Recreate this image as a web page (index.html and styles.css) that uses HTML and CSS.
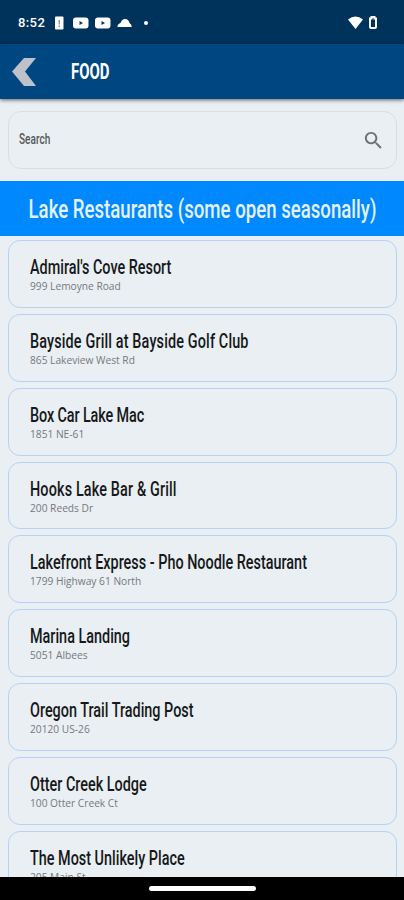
FILE: index.html
```html
<!DOCTYPE html>
<html lang="en">
<head>
  <meta charset="UTF-8">
  <meta name="viewport" content="width=device-width, initial-scale=1.0">
  <title>Food</title>
  <link rel="stylesheet" href="styles.css">
</head>
<body>
  <div class="screen">
    <!-- Status bar -->
    <div class="status-bar">
      <span class="clock">8:52</span>
      <svg class="status-left" width="98" height="16" viewBox="0 0 98 16">
        <rect x="1" y="2.500" width="8.500" height="13" rx="1" fill="#fff"/>
        <path d="M5.200 6v4.500M5.200 11.500v1.500" stroke="#55658c" stroke-width="1"/>
        <rect x="19" y="3.500" width="15.500" height="11" rx="3" fill="#fff"/>
        <path d="M25.500 7l3.500 2-3.500 2z" fill="#00335c"/>
        <rect x="41" y="3.500" width="15.500" height="11" rx="3" fill="#fff"/>
        <path d="M47.500 7l3.500 2-3.500 2z" fill="#00335c"/>
        <path d="M63.500 13q-.5-2.500 3-4 1.500-4 4.500-4 3.500 0 4.500 4 2 .8 2.300 4z" fill="#fff"/>
        <circle cx="92" cy="9" r="2" fill="#fff"/>
      </svg>
      <svg class="status-right" width="32" height="16" viewBox="0 0 32 16">
        <path d="M1 5.500Q8.500-.5 16 5.500L8.500 15z" fill="#fff"/>
        <path d="M23 4.500h1.500V3h3v1.500H29v8.500q0 1-1 1h-4q-1 0-1-1z" fill="none" stroke="#fff" stroke-width="2"/>
      </svg>
    </div>

    <!-- App bar -->
    <header class="app-bar">
      <svg class="back" width="26" height="30" viewBox="0 0 26 30">
        <path d="M12 1h12L13 14.500 24 29H12L0 14.500z" fill="#bcc1ca"/>
      </svg>
      <h1><span>FOOD</span></h1>
    </header>

    <main>
      <div class="search">
        <span class="search-label">Search</span>
        <svg width="23" height="23" viewBox="0 0 24 24">
          <path fill="#6d7072" d="M15.500 14h-.79l-.28-.27C15.410 12.590 16 11.110 16 9.500 16 5.910 13.090 3 9.500 3S3 5.910 3 9.500 5.910 16 9.500 16c1.610 0 3.090-.59 4.230-1.570l.27.28v.79l5 4.990L20.490 19l-4.990-5zm-6 0C7.010 14 5 11.990 5 9.500S7.010 5 9.500 5 14 7.010 14 9.500 11.990 14 9.500 14z"/>
        </svg>
      </div>

      <h2 class="section"><span>Lake Restaurants (some open seasonally)</span></h2>

      <ul class="places">
        <li><h3>Admiral's Cove Resort</h3><p>999 Lemoyne Road</p></li>
        <li><h3 class="wide">Bayside Grill at Bayside Golf Club</h3><p>865 Lakeview West Rd</p></li>
        <li><h3 class="tight">Box Car Lake Mac</h3><p>1851 NE-61</p></li>
        <li><h3 class="wide">Hooks Lake Bar &amp; Grill</h3><p>200 Reeds Dr</p></li>
        <li><h3>Lakefront Express - Pho Noodle Restaurant</h3><p>1799 Highway 61 North</p></li>
        <li><h3>Marina Landing</h3><p>5051 Albees</p></li>
        <li><h3>Oregon Trail Trading Post</h3><p>20120 US-26</p></li>
        <li><h3>Otter Creek Lodge</h3><p>100 Otter Creek Ct</p></li>
        <li><h3>The Most Unlikely Place</h3><p>205 Main St</p></li>
      </ul>
    </main>

    <!-- Gesture bar -->
    <div class="nav-bar"><div class="handle"></div></div>
  </div>
</body>
</html>
```
FILE: styles.css
```css
* {
  box-sizing: border-box;
}
body {
  margin: 0;
  font-family: Roboto, sans-serif;
  background: #e9eff3;
}
h1, h2, h3, p, ul {
  margin: 0;
  padding: 0;
  font-weight: 400;
}
.screen {
  display: flex;
  flex-direction: column;
  height: 900px;
  overflow: hidden;
}
.status-bar {
  flex: none;
  display: flex;
  align-items: center;
  height: 44px;
  padding: 0 25px 0 18px;
  background: #00335c;
  color: #fff;
}
.clock {
  width: 36px;
  font-size: 13px;
  font-weight: 500;
  letter-spacing: 0.4px;
}
.status-right {
  margin-left: auto;
}
.app-bar {
  flex: none;
  display: flex;
  align-items: center;
  height: 55px;
  padding-left: 12px;
  background: #004680;
  color: #fff;
  box-shadow: 0 1px 4px rgba(0, 0, 0, 0.6);
  z-index: 1;
}
.app-bar h1 {
  margin-left: 33px;
  font-size: 22px;
  font-weight: 700;
  line-height: 30px;
}
.app-bar h1 span,
.section span,
.search-label,
.places h3 {
  display: inline-block;
  white-space: nowrap;
  transform: scaleX(0.72);
  transform-origin: left center;
}
.app-bar h1 span {
  transform: scaleX(0.68);
}
main {
  flex: 1;
  min-height: 0;
  overflow: hidden;
}
.search {
  display: flex;
  align-items: center;
  justify-content: space-between;
  height: 58px;
  margin: 12px 7px 12px 8px;
  padding: 0 11px 0 10px;
  border: 1px solid #d9dee1;
  border-radius: 13px;
  color: #55585a;
}
.search-label {
  padding-bottom: 2px;
  font-size: 14px;
  font-weight: 500;
}
.section {
  display: flex;
  justify-content: center;
  height: 55px;
  background: #0088ff;
  color: #e4f1ff;
  font-size: 25px;
  font-weight: 500;
  line-height: 57px;
}
.section span {
  transform: scaleX(0.745);
  transform-origin: center;
}
.places {
  display: flex;
  flex-direction: column;
  gap: 6px;
  padding: 4px 7px 0 8px;
  list-style: none;
}
.places li {
  flex: none;
  height: 67.85px;
  padding: 14px 0 0 21px;
  border: 1px solid #b5d2f5;
  border-radius: 12px;
}
.places h3 {
  display: block;
  color: #161819;
  font-size: 20px;
  font-weight: 500;
  line-height: 24px;
}
.places .wide {
  letter-spacing: 0.2px;
}
.places .tight {
  letter-spacing: -0.15px;
}
.places p {
  margin-top: -1px;
  color: #75797c;
  font-family: "Open Sans", sans-serif;
  font-size: 10.2px;
  line-height: 16px;
}
.nav-bar {
  flex: none;
  display: flex;
  justify-content: center;
  height: 23px;
  padding-top: 9px;
  background: #000;
}
.handle {
  width: 107px;
  height: 5px;
  border-radius: 3px;
  background: #fff;
}
```
